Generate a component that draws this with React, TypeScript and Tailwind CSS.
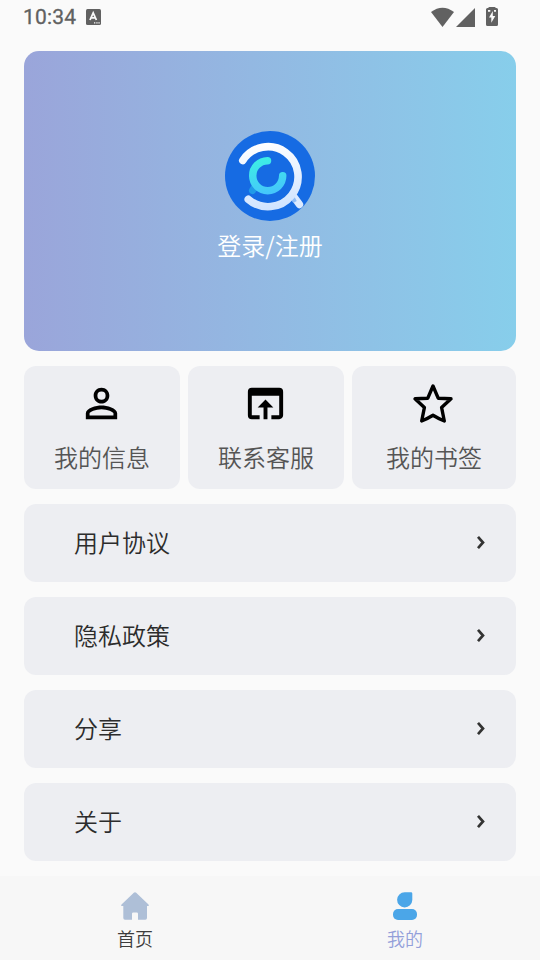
import { MdOpenInBrowser, MdPersonOutline } from "react-icons/md";

const rows = ["用户协议", "隐私政策", "分享", "关于"];

function StatusBar() {
  return (
    <div className="flex h-[51px] items-start justify-between pl-[23px] pr-[42px] text-[#616161]">
      <div className="flex h-[34px] items-center">
        <span className="w-[63px] font-['Roboto'] text-[21px] font-normal leading-[34px] tracking-[0.2px] [-webkit-text-stroke:0.3px_#616161]">
          10:34
        </span>
        <svg className="h-[16px] w-[15px]" viewBox="0 0 15 16">
          <rect width="15" height="16" rx="1.5" fill="currentColor" />
          <path d="M4 11 7.2 4 10.4 11M5.3 8.8h3.8" fill="none" stroke="#fafafa" strokeWidth="1.8" />
          <path d="M8 13.2h1.3v1.3H8zM10.3 13.2h1.3v1.3h-1.3zM12.4 13.2h1.3v1.3h-1.3z" fill="#fafafa" />
        </svg>
      </div>
      <svg className="mt-[7px] h-[20px] w-[67px]" viewBox="0 0 67 20">
        <path d="M0 5Q11.500-3.500 23 5L11.500 20Z" fill="currentColor" />
        <path d="M44 1V20H25Z" fill="currentColor" />
        <path
          d="M58.500 0h5q1 0 1.300 1h.7q1.500 0 1.500 1.500v15q0 1.500-1.500 1.500h-9q-1.500 0-1.500-1.500v-15q0-1.500 1.500-1.500h.7q.3-1 1.300-1z"
          fill="currentColor"
        />
        <path d="M61.800 4 58 10.500h2.300v5.300l4-6.800h-2.500z" fill="#fafafa" />
        <path d="M57 3h2.300v1.700H57zM63 3h2v1.700h-2z" fill="#fafafa" />
      </svg>
    </div>
  );
}

function Logo() {
  return (
    <svg className="h-[90px] w-[90px]" viewBox="0 0 90 90" fill="none" strokeLinecap="round">
      <defs>
        <linearGradient id="ring" gradientUnits="userSpaceOnUse" x1="40" y1="12" x2="50" y2="78">
          <stop offset="0" stopColor="#ffffff" />
          <stop offset="1" stopColor="#cfe3ff" />
        </linearGradient>
        <linearGradient id="core" gradientUnits="userSpaceOnUse" x1="38" y1="26" x2="46" y2="62">
          <stop offset="0" stopColor="#3df0e4" />
          <stop offset="1" stopColor="#45c6fb" />
        </linearGradient>
      </defs>
      <circle cx="45" cy="45" r="45" fill="#166be3" />
      <path d="M27.500 59.500 30.500 55" stroke="#209ae8" strokeWidth="7" />
      <path d="M69 66 74.500 73.500" stroke="#dceaff" strokeWidth="7.400" />
      <path d="M67 65.500 70 71" stroke="#8fbdf7" strokeWidth="4" strokeLinecap="butt" />
      <path d="M17.800 29.500A30 30 0 1 1 23.300 68.300" stroke="url(#ring)" strokeWidth="7.600" />
      <path d="M42.500 29.700A15 15 0 1 0 57.700 44.800" stroke="url(#core)" strokeWidth="7.500" />
    </svg>
  );
}

function StarIcon() {
  return (
    <svg className="-ml-[2px] h-[46px] w-[46px]" viewBox="0 0 46 46" fill="none">
      <path
        d="M23 5 28.200 17.200 41 17.800 31.600 26.500 34.300 40 Q29 38 23 34.300 17 38 11.700 40L14.400 26.500 5 17.800 17.800 17.200Z"
        stroke="#000"
        strokeWidth="3.400"
        strokeLinejoin="round"
      />
    </svg>
  );
}

export default function App() {
  return (
    <div className="flex h-[960px] w-[540px] flex-col overflow-hidden bg-[#fafafa] font-['Noto_Sans_CJK_SC_DemiLight','Noto_Sans_CJK_SC',sans-serif] font-[350]">
      <StatusBar />

      <main className="flex flex-1 flex-col gap-[15px] px-6">
        <section className="flex h-[300px] flex-col items-center rounded-[15px] bg-linear-to-r from-[#9aa5da] to-[#87ceeb] pt-20 text-white">
          <Logo />
          <p className="mt-[6px] text-[24px] leading-[36px]">登录/注册</p>
        </section>

        <section className="grid grid-cols-[156px_156px_164px] gap-2 text-[24px] leading-[36px] text-[#555555]">
          <div className="flex h-[123px] flex-col items-center rounded-xl bg-[#edeef2] pt-[14px]">
            <MdPersonOutline className="-ml-[2px] size-[47px] text-black" />
            <span className="mt-3">我的信息</span>
          </div>
          <div className="flex h-[123px] flex-col items-center rounded-xl bg-[#edeef2] pt-[14px]">
            <MdOpenInBrowser className="-ml-[2px] size-[47px] text-black" />
            <span className="mt-3">联系客服</span>
          </div>
          <div className="flex h-[123px] flex-col items-center rounded-xl bg-[#edeef2] pt-[15px]">
            <StarIcon />
            <span className="mt-3">我的书签</span>
          </div>
        </section>

        {rows.map((label) => (
          <div
            key={label}
            className="flex h-[78px] items-center justify-between rounded-xl bg-[#edeef2] pl-[50px] pr-[31px] text-[24px] text-[#2c2c2c]"
          >
            <span className="pb-[2px]">{label}</span>
            <svg className="h-[16px] w-[9px]" viewBox="0 0 9 16" fill="none">
              <path d="M2 1.800 7 7.500 2 13.200" stroke="#333" strokeWidth="2.700" />
            </svg>
          </div>
        ))}
      </main>

      <nav className="grid h-[84px] grid-cols-2 bg-[#f7f7f7] text-[18px] leading-[27px]">
        <div className="flex flex-col items-center pt-4 text-[#3c3c3c]">
          <svg className="h-[28px] w-[28px]" viewBox="0 0 28 28">
            <path
              d="M12.800.700q1.200-.9 2.400 0L27.500 12.500q.8 1.500-.5 1.500h-1v12q0 1.700-1.700 1.700H17v-6q0-1.200-1.200-1.200h-3.600q-1.200 0-1.200 1.200v6H4q-1.700 0-1.700-1.700V14H1q-1.300 0-.5-1.500Z"
              fill="#aebfd7"
            />
          </svg>
          <span className="mt-[5px]">首页</span>
        </div>
        <div className="flex flex-col items-center pt-4 text-[#939fda]">
          <svg className="h-[28px] w-[28px]" viewBox="0 0 28 28" fill="#4ba6e8">
            <path d="M13.700.200h6.300q1.300 0 1.300 1.300v6.500A7.600 7.600 0 1 1 13.700.200Z" />
            <rect x="2" y="17" width="24" height="10.900" rx="5" />
          </svg>
          <span className="mt-[5px]">我的</span>
        </div>
      </nav>
    </div>
  );
}
